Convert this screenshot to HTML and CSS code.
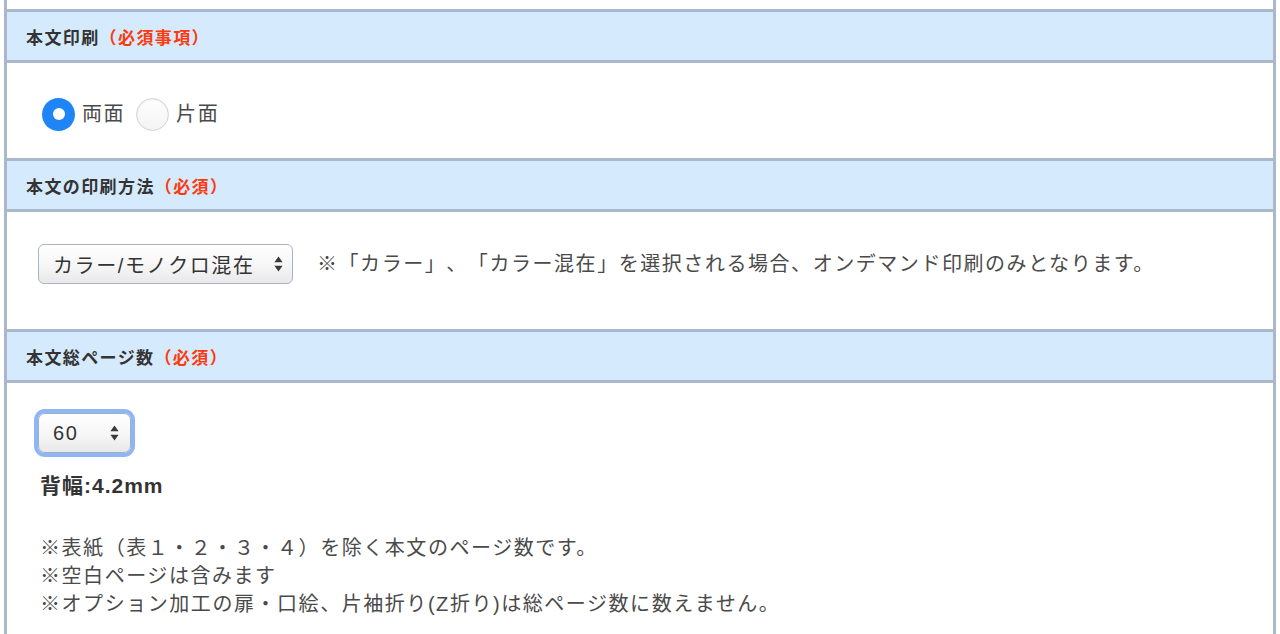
FILE: index.html
```html
<!DOCTYPE html>
<html lang="ja">
<head>
<meta charset="utf-8">
<title>本文設定</title>
<link rel="stylesheet" href="styles.css">
</head>
<body>
<div class="form">
  <div class="sec-body sec-prev"></div>

  <div class="sec-head">本文印刷<span class="req">（必須事項）</span></div>
  <div class="sec-body sec-radio">
    <label class="opt"><span class="radio on"></span><span class="opt-text">両面</span></label>
    <label class="opt"><span class="radio"></span><span class="opt-text">片面</span></label>
  </div>

  <div class="sec-head">本文の印刷方法<span class="req">（必須）</span></div>
  <div class="sec-body sec-method">
    <div class="select select-wide">
      <span class="select-text">カラー/モノクロ混在</span>
      <svg class="arrows" width="9" height="16" viewBox="0 0 9 16"><path d="M4.5 0.5 L8.6 6.3 L0.4 6.3 Z M4.5 15.5 L8.6 9.7 L0.4 9.7 Z" fill="#3a3a3a"/></svg>
    </div>
    <p class="note-inline">※「カラー」、「カラー混在」を選択される場合、オンデマンド印刷のみとなります。</p>
  </div>

  <div class="sec-head">本文総ページ数<span class="req">（必須）</span></div>
  <div class="sec-body sec-pages">
    <div class="select select-small focused">
      <span class="select-text">60</span>
      <svg class="arrows" width="9" height="16" viewBox="0 0 9 16"><path d="M4.5 0.5 L8.6 6.3 L0.4 6.3 Z M4.5 15.5 L8.6 9.7 L0.4 9.7 Z" fill="#3a3a3a"/></svg>
    </div>
    <p class="spine">背幅:4.2mm</p>
    <ul class="notes">
      <li>※表紙（表１・２・３・４）を除く本文のページ数です。</li>
      <li>※空白ページは含みます</li>
      <li>※オプション加工の扉・口絵、片袖折り(Z折り)は総ページ数に数えません。</li>
    </ul>
  </div>
</div>
</body>
</html>
```

FILE: styles.css
```css
html, body {
  margin: 0;
  padding: 0;
  background: #ffffff;
}

body {
  font-family: "Liberation Sans", "Noto Sans CJK JP", sans-serif;
  color: #4a4a4a;
  overflow: hidden;
  text-spacing-trim: space-all;
}

.form {
  margin: 0 4px;
  border-left: 3px solid #a9b8ca;
  border-right: 3px solid #a9b8ca;
  min-height: 634px;
  box-sizing: border-box;
  background: #ffffff;
}

.sec-prev {
  height: 9px;
}

.sec-head {
  height: 48px;
  border-top: 3px solid #a9b8ca;
  border-bottom: 3px solid #a9b8ca;
  background: #d5eafc;
  display: flex;
  align-items: center;
  padding-left: 19px;
  font-size: 17px;
  font-weight: bold;
  letter-spacing: 1.4px;
  color: #333333;
}

.req {
  color: #fb3b0f;
}

.sec-body {
  padding-left: 31px;
  font-size: 20px;
  letter-spacing: 1.55px;
}

.sec-radio {
  height: 95px;
  box-sizing: border-box;
  padding-top: 35px;
  padding-left: 35px;
  display: flex;
  align-items: flex-start;
  gap: 11px;
}

.opt {
  display: flex;
  align-items: center;
  gap: 7px;
  height: 32px;
}

.opt-text {
  line-height: 32px;
  color: #4a4a4a;
}

.radio {
  width: 33px;
  height: 33px;
  box-sizing: border-box;
  border-radius: 50%;
  border: 1px solid #d4d4d4;
  background: linear-gradient(#ffffff, #f3f3f3);
  box-shadow: inset 0 1px 2px rgba(0, 0, 0, 0.08);
  display: flex;
  align-items: center;
  justify-content: center;
}

.radio.on {
  border: none;
  background: #1f85f7;
  box-shadow: none;
}

.radio.on::after {
  content: "";
  width: 12px;
  height: 12px;
  border-radius: 50%;
  background: #ffffff;
}

.sec-method {
  height: 117px;
  box-sizing: border-box;
  padding-top: 32px;
  display: flex;
  align-items: flex-start;
  gap: 24px;
}

.select {
  height: 40px;
  box-sizing: border-box;
  border: 1px solid #a6b4c6;
  border-radius: 6px;
  background: linear-gradient(#ffffff 0%, #f6f6f6 55%, #e8e8e8 100%);
  display: flex;
  align-items: center;
  justify-content: space-between;
  padding: 0 9px 0 14px;
  color: #333333;
}

.select-wide {
  width: 255px;
}

.select-small {
  width: 93px;
  padding-right: 11px;
}

.select.focused {
  border-color: #9fb0c6;
  box-shadow: 0 0 0 4px #8fb5f6;
  border-radius: 7px;
}

.select-text {
  font-size: 20px;
  letter-spacing: 1.6px;
  white-space: nowrap;
}

.arrows {
  flex: none;
}

.note-inline {
  margin: 0;
  line-height: 40px;
  white-space: nowrap;
}

.sec-pages {
  padding-top: 30px;
  padding-left: 31px;
}

.spine {
  margin: 19px 0 0 2px;
  font-size: 21px;
  font-weight: bold;
  line-height: 28px;
  color: #333333;
  letter-spacing: 1px;
}

.notes {
  list-style: none;
  margin: 34px 0 0 2px;
  padding: 0;
  line-height: 28px;
}
```
